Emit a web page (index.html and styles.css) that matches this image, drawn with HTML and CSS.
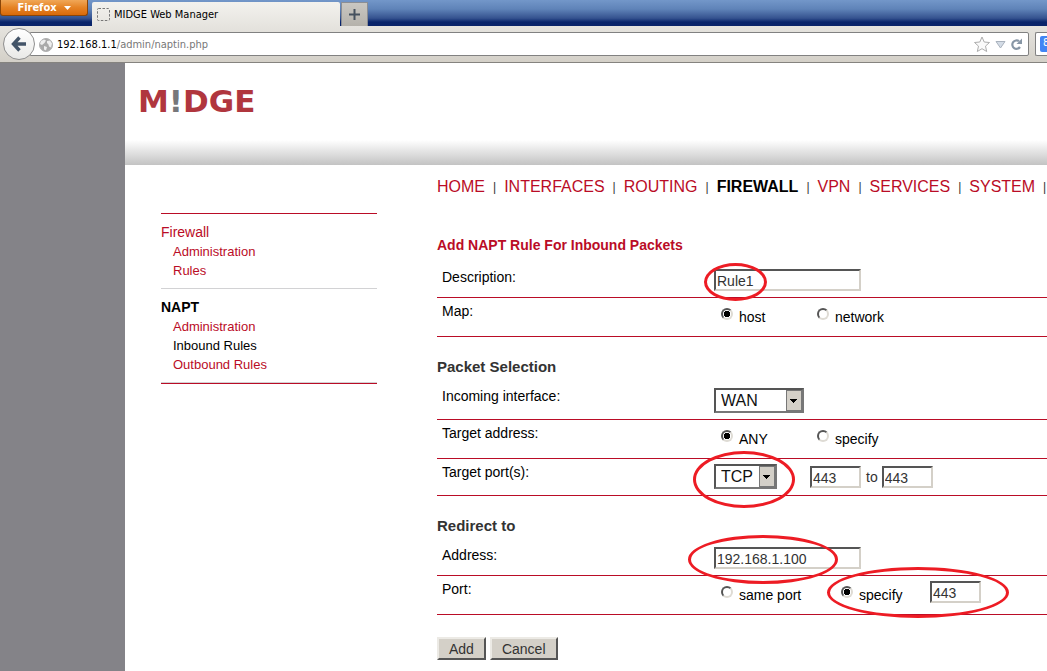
FILE: index.html
```html
<!DOCTYPE html>
<html lang="en">
<head>
<meta charset="utf-8">
<title>MIDGE Web Manager</title>
<link rel="stylesheet" href="styles.css">
</head>
<body>
<div class="browser">
  <div class="titlebar">
    <button class="app-menu" type="button">Firefox
      <svg width="7" height="4" viewBox="0 0 7 4"><path d="M0 0h7L3.5 4z" fill="#fff"/></svg>
    </button>
    <div class="tab">
      <svg width="15" height="15" viewBox="0 0 15 15"><rect x="1.500" y="1.500" width="12" height="12" rx="1" fill="none" stroke="#777" stroke-dasharray="2.5 1.5"/></svg>
      <span>MIDGE Web Manager</span>
    </div>
    <button class="new-tab" type="button" aria-label="New tab">
      <svg width="11" height="11" viewBox="0 0 11 11"><path d="M5.5 0v11M0 5.5h11" stroke="#46525f" stroke-width="2"/></svg>
    </button>
  </div>
  <div class="toolbar">
    <button class="back" type="button" aria-label="Back">
      <svg width="18" height="18" viewBox="0 0 18 18"><path d="M9.500 2.500L3.500 9l6 6.500M4 9H16" fill="none" stroke="#435468" stroke-width="3.400"/></svg>
    </button>
    <div class="location">
      <svg width="14" height="14" viewBox="0 0 14 14"><circle cx="7" cy="7" r="6.500" fill="#a9a9a9" stroke="#b0b0b0"/><path d="M2 3l3-1.500 2 1L5.500 5 3 7 1 6zM8 3l3-.5 2 3-1 4-2-1-.5-2L8 5zM5 8l3 1-1 3.500-2-1z" fill="#ededed"/></svg>
      <span class="url"><b>192.168.1.1</b>/admin/naptin.php</span>
      <svg width="18" height="17" viewBox="0 0 18 17"><path d="M9 1l2.200 5 5.300.5-4 3.600 1.200 5.400L9 12.700l-4.700 2.800 1.200-5.400-4-3.600L6.800 6z" fill="#fafafa" stroke="#adadad"/></svg>
      <svg width="11" height="8" viewBox="0 0 11 8"><path d="M1 .5h9L5.500 7z" fill="#d4dce6" stroke="#a9b2bd"/></svg>
      <svg width="13" height="13" viewBox="0 0 13 13"><path d="M9 3.200A4.200 4.200 0 1 0 10 9" fill="none" stroke="#8796a5" stroke-width="2.200"/><path d="M12 .5V6H6.500z" fill="#8796a5"/></svg>
    </div>
    <div class="search"><span class="engine">8</span></div>
  </div>
</div>

<div class="page">
  <header class="banner"><div class="logo">M<i>!</i>DGE</div></header>
  <div class="columns">
    <aside class="side">
      <div class="group">
        <a class="top" href="#">Firewall</a>
        <a href="#">Administration</a>
        <a href="#">Rules</a>
      </div>
      <div class="group">
        <a class="top current" href="#">NAPT</a>
        <a href="#">Administration</a>
        <a class="here" href="#">Inbound Rules</a>
        <a href="#">Outbound Rules</a>
      </div>
    </aside>
    <main class="main">
      <nav class="menu">
        <a href="#">HOME</a><span>|</span><a href="#">INTERFACES</a><span>|</span><a href="#">ROUTING</a><span>|</span><a class="current" href="#">FIREWALL</a><span>|</span><a href="#">VPN</a><span>|</span><a href="#">SERVICES</a><span>|</span><a href="#">SYSTEM</a><span>|</span>
      </nav>
      <form>
        <section>
          <h1>Add NAPT Rule For Inbound Packets</h1>
          <div class="row">
            <label class="name" for="desc">Description:</label>
            <div class="value"><input class="text wide" id="desc" type="text" value="Rule1"><span class="mark mark-desc"></span></div>
          </div>
          <div class="row">
            <span class="name">Map:</span>
            <div class="value options">
              <label class="option"><input type="radio" name="map" checked><span>host</span></label>
              <label class="option"><input type="radio" name="map"><span>network</span></label>
            </div>
          </div>
        </section>
        <section>
          <h2>Packet Selection</h2>
          <div class="row">
            <label class="name" for="iface">Incoming interface:</label>
            <div class="value"><select class="wan" id="iface"><option>WAN</option></select></div>
          </div>
          <div class="row">
            <span class="name">Target address:</span>
            <div class="value options">
              <label class="option"><input type="radio" name="target" checked><span>ANY</span></label>
              <label class="option"><input type="radio" name="target"><span>specify</span></label>
            </div>
          </div>
          <div class="row">
            <label class="name" for="proto">Target port(s):</label>
            <div class="value">
              <select class="tcp" id="proto"><option>TCP</option></select>
              <input class="text short" type="text" value="443" aria-label="First port">
              <label class="to" for="last">to</label>
              <input class="text short" id="last" type="text" value="443">
              <span class="mark mark-proto"></span>
            </div>
          </div>
        </section>
        <section>
          <h2>Redirect to</h2>
          <div class="row">
            <label class="name" for="addr">Address:</label>
            <div class="value"><input class="text wide" id="addr" type="text" value="192.168.1.100"><span class="mark mark-addr"></span></div>
          </div>
          <div class="row">
            <span class="name">Port:</span>
            <div class="value options ports">
              <label class="option"><input type="radio" name="port"><span>same port</span></label>
              <label class="option"><input type="radio" name="port" checked><span>specify</span></label>
              <input class="text short" type="text" value="443" aria-label="Redirect port">
              <span class="mark mark-port"></span>
            </div>
          </div>
        </section>
        <div class="actions">
          <button type="submit">Add</button>
          <button type="button">Cancel</button>
        </div>
      </form>
    </main>
  </div>
</div>
</body>
</html>
```

FILE: styles.css
```css
* { box-sizing: border-box; }

body {
  margin: 0;
  min-height: 100vh;
  display: flex;
  flex-direction: column;
  overflow: hidden;
  background: #848388;
  color: #000;
  font: 14px/16px "Liberation Sans", Arial, sans-serif;
}

svg { flex: none; display: block; }
a { color: #ba0c26; text-decoration: none; }
button, input, select { margin: 0; font: inherit; }

/* Browser window */
.browser { font: 11px/14px "DejaVu Sans Condensed", Tahoma, sans-serif; }

.titlebar {
  display: flex;
  align-items: flex-start;
  height: 26px;
  background: linear-gradient(#7397c9 0, #5f83b8 35%, #35528f 70%, #08246b 85%, #0a246a);
}

.app-menu {
  display: flex;
  align-items: center;
  justify-content: center;
  gap: 7px;
  width: 88px;
  height: 16px;
  padding: 0;
  border: 1px solid #8a4508;
  border-top: 0;
  border-radius: 0 0 3px 3px;
  background: linear-gradient(#f0a757, #e58325 50%, #d96a0a);
  color: #fff;
  font-weight: bold;
}

.tab {
  display: flex;
  align-items: center;
  gap: 3px;
  width: 248px;
  height: 24px;
  margin: 2px 1px 0 4px;
  padding: 1px 0 0 4px;
  border-radius: 2px 2px 0 0;
  background: linear-gradient(#f3f2ee, #e6e4df);
}

.new-tab {
  display: grid;
  place-items: center;
  width: 27px;
  height: 24px;
  margin-top: 2px;
  padding: 0;
  border: 1px solid #8b8e94;
  border-bottom: 0;
  background: linear-gradient(#c9c7c2, #b5b2ab);
}

.toolbar {
  display: flex;
  align-items: center;
  height: 37px;
  padding-left: 3px;
  border-bottom: 1px solid #85837f;
  background: linear-gradient(#e6e4df, #d4d0c8);
}

.back {
  z-index: 1;
  display: grid;
  place-items: center;
  flex: none;
  width: 32px;
  height: 32px;
  padding: 0;
  border: 1px solid #8f8f8f;
  border-radius: 50%;
  background: linear-gradient(#fff, #e9e9e7);
}

.location {
  display: flex;
  flex: 1;
  align-items: center;
  gap: 4px;
  height: 24px;
  margin-left: -5px;
  padding: 1px 5px 0 8px;
  border: 1px solid #818181;
  border-radius: 0 2px 2px 0;
  background: #fff;
}

.url { flex: 1; color: #777; }
.url b { color: #000; font-weight: normal; }

.search {
  flex: none;
  width: 12px;
  height: 24px;
  margin-left: 6px;
  padding: 3px 0 3px 4px;
  overflow: hidden;
  border: 1px solid #818181;
  border-right: 0;
  border-radius: 2px 0 0 2px;
  background: #fff;
}

.engine {
  display: block;
  width: 16px;
  height: 16px;
  padding-left: 3px;
  border-radius: 2px;
  background: #4285f4;
  color: #fff;
}

/* Web page */
.page { flex: 1; margin-left: 125px; background: #fff; }

.banner {
  height: 102px;
  padding: 20px 13px;
  background: linear-gradient(#fff 77px, #c3c3c3);
}

.logo {
  color: #b0363e;
  font: bold 31px/36px "DejaVu Sans", sans-serif;
}

.logo i { color: #77777a; font-style: normal; }

.columns { display: flex; }

.side {
  flex: none;
  align-self: flex-start;
  width: 216px;
  margin: 48px 60px 0 36px;
  border-top: 1px solid #ba0c26;
  border-bottom: 1px solid #ba0c26;
  font-size: 13px;
}

.group { padding: 8px 0; border-bottom: 1px solid #d2d2d4; }
.group a { display: block; padding-left: 12px; line-height: 19px; }
.group .top { padding-left: 0; font-size: 14px; line-height: 20px; }
.group .current, .menu .current { color: #000; font-weight: bold; }
.group .here { color: #000; }

.main { flex: 1; min-width: 0; padding-top: 12px; }

.menu {
  display: flex;
  gap: 8px;
  margin-bottom: 40px;
  overflow: hidden;
  font-size: 16px;
  line-height: 20px;
  white-space: nowrap;
}

.menu span { color: #333; font-size: 12px; }

h1, h2 {
  margin: 0 0 8px;
  color: #333;
  font-size: 15px;
  line-height: 16px;
}

h1 { margin-bottom: 11px; color: #ba0c26; font-size: 14px; }
section { margin-bottom: 22px; }

.row {
  display: flex;
  padding: 5px 0 6px 5px;
  border-bottom: 1px solid #ba0c26;
}

.name { flex: none; width: 272px; }
.value { position: relative; display: flex; align-items: center; }

.options {
  display: grid;
  grid-template-columns: 96px 96px;
  align-items: start;
  min-height: 27px;
  padding-left: 7px;
}

.ports { grid-template-columns: 120px 89px 51px; }
.option { display: flex; gap: 6px; }
.option span { padding-top: 6px; }

input[type="radio"] {
  appearance: none;
  width: 12px;
  height: 12px;
  margin-top: 5px;
  border: 2px solid;
  border-color: #555 #dedbd4 #dedbd4 #555;
  border-radius: 50%;
  background: #fff;
}

input[type="radio"]:checked { background: radial-gradient(circle, #000 3px, #fff 3px); }

.text {
  height: 22px;
  padding: 2px 1px 0;
  border: 2px solid;
  border-color: #555 #d4d0c8 #d4d0c8 #555;
  background: #fff;
  color: #333;
}

.wide { width: 147px; }
.short { width: 51px; }
.to { margin: 0 4px 0 5px; color: #333; }

select {
  appearance: none;
  height: 25px;
  padding: 0 5px;
  border: 2px solid;
  border-color: #555 #777 #777 #555;
  border-radius: 0;
  background:
    linear-gradient(#000, #000) right 5px top 9px / 7px 1px no-repeat,
    linear-gradient(#000, #000) right 6px top 10px / 5px 1px no-repeat,
    linear-gradient(#000, #000) right 7px top 11px / 3px 1px no-repeat,
    linear-gradient(#000, #000) right 8px top 12px / 1px 1px no-repeat,
    linear-gradient(#d4d0c8, #d4d0c8) right 1px top 1px / 14px 19px no-repeat,
    linear-gradient(#777, #777) right / 16px 100% no-repeat,
    #fff;
  color: #111;
  font-size: 16px;
}

.wan { width: 90px; }
.tcp { width: 63px; margin-right: 33px; }

/* Highlight rings laid over the fields */
.mark {
  position: absolute;
  border: 3px solid #ed1c24;
  border-radius: 50%;
  pointer-events: none;
}

.mark-desc { left: -10px; top: -6px; width: 63px; height: 38px; }
.mark-proto { left: -21px; top: -13px; width: 102px; height: 57px; }
.mark-addr { left: -26px; top: -12px; width: 150px; height: 49px; }
.mark-port { left: 113px; top: -14px; width: 182px; height: 51px; }

.actions { display: flex; gap: 4px; }

.actions button {
  height: 23px;
  padding: 0 10px;
  border: 2px solid;
  border-color: #eceae5 #555 #555 #eceae5;
  background: #d4d0c8;
  color: #333;
}
```
